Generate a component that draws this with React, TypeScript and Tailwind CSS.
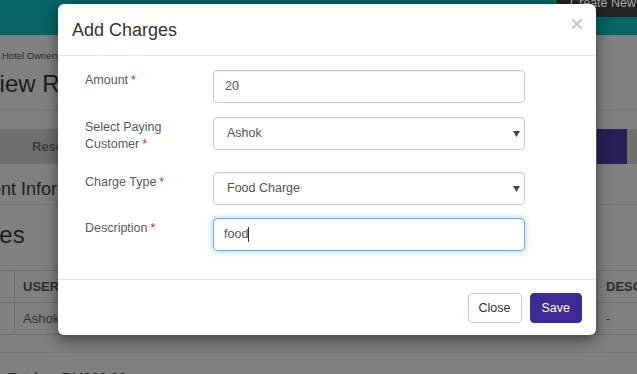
import React from "react";

const Req = () => <span className="text-[#e0182d] ml-[3px]">*</span>;

const Arrow = () => (
  <svg width="7" height="6" viewBox="0 0 7 6" className="shrink-0">
    <polygon points="0,0 7,0 3.5,6" fill="#444" />
  </svg>
);

function Row({
  h,
  label,
  children,
}: {
  h: string;
  label: React.ReactNode;
  children: React.ReactNode;
}) {
  return (
    <div className={`flex items-start ${h}`}>
      <div className="w-[128px] shrink-0 pr-[15px] pt-[2px] text-[12.5px] leading-[17px] text-[#575a63]">
        {label}
      </div>
      <div className="flex-1">{children}</div>
    </div>
  );
}

export default function App() {
  return (
    <div className="relative w-[637px] h-[374px] overflow-hidden bg-[#808080] font-['Liberation_Sans',Arial,sans-serif]">
      {/* dimmed page */}
      <div className="flex flex-col">
        <div className="h-[35px] bg-[#066464] flex justify-end">
          <div className="w-[80px] h-[17px] bg-[#232323] overflow-hidden pl-[13px]">
            <div className="text-[12.5px] leading-[13px] -mt-[3px] text-[#a9a9a9] whitespace-nowrap">
              Create New
            </div>
          </div>
        </div>
        <div className="mt-[15px] pl-[2px] text-[9.5px] leading-[11px] text-[#2a2a2a] whitespace-nowrap">
          Hotel Owners
        </div>
        <div className="mt-[6px] -ml-[16px] text-[24px] leading-[34px] text-[#1c1c1c] whitespace-nowrap">
          View Reservation
        </div>
        <div className="mt-[8px] h-px bg-[#777]" />
        <div className="mt-[19px] h-[35px] bg-[#6f6f6f] flex items-center">
          <div className="pl-[32px] text-[13px] font-bold text-[#3c3c3c]">Reservation</div>
          <div className="ml-auto mr-[10px] w-[30px] h-full bg-[#281e58]" />
        </div>
        <div className="mt-[14px] -ml-[55px] text-[18px] leading-[22px] text-[#1c1c1c] whitespace-nowrap">
          Payment Information
        </div>
        <div className="mt-[4px] h-px bg-[#777]" />
        <div className="mt-[15px] -ml-[66px] text-[24px] leading-[30px] text-[#1c1c1c] whitespace-nowrap">
          Charges
        </div>
        <div className="mt-[20px] border-t border-[#6f6f6f]">
          <div className="flex h-[32px] border-b border-[#6f6f6f]">
            <div className="w-[15px] border-r border-[#6f6f6f]" />
            <div className="flex-1 pl-[8px] flex items-center text-[13px] font-bold text-[#2e2e2e]">USER</div>
            <div className="w-[40px] border-l border-[#6f6f6f] pl-[8px] flex items-center text-[13px] font-bold text-[#2e2e2e] overflow-hidden">
              DESCRIPTION
            </div>
          </div>
          <div className="flex h-[32px] border-b border-[#6f6f6f]">
            <div className="w-[15px] border-r border-[#6f6f6f]" />
            <div className="flex-1 pl-[8px] flex items-center text-[13px] text-[#333]">Ashok</div>
            <div className="w-[40px] border-l border-[#6f6f6f] pl-[8px] flex items-center text-[13px] text-[#333]">
              -
            </div>
          </div>
        </div>
        <div className="mt-[17px] h-px bg-[#777]" />
        <div className="mt-[17px] flex pl-[8px] text-[14px] leading-[16px] text-[#222]">
          <span>Total</span>
          <span className="ml-[24px]">RM000.00</span>
        </div>
      </div>

      {/* modal */}
      <div className="absolute left-[58px] top-[4px] w-[538px] bg-white rounded-[6px] shadow-[0_5px_15px_rgba(0,0,0,0.5)]">
        <div className="flex justify-between pt-[16px] pb-[15px] pl-[14px] pr-[14px] border-b border-[#e5e5e5]">
          <h4 className="text-[18px] leading-[20px] text-[#333]">Add Charges</h4>
          <svg width="10" height="10" viewBox="0 0 10 10" className="-mt-[1px]">
            <path d="M1 1 L9 9 M9 1 L1 9" stroke="#c8c8c8" strokeWidth="2" strokeLinecap="square" />
          </svg>
        </div>
        <div className="pt-[14px] pb-[28px] pl-[27px] pr-[71px]">
          <Row
            h="h-[47px]"
            label={
              <>
                Amount
                <Req />
              </>
            }
          >
            <div className="h-[33px] border border-[#ccc] rounded-[4px] px-[11px] flex items-center text-[12.5px] text-[#555] shadow-[inset_0_1px_1px_rgba(0,0,0,0.075)]">
              20
            </div>
          </Row>
          <Row
            h="h-[55px]"
            label={
              <>
                Select Paying Customer
                <Req />
              </>
            }
          >
            <div className="h-[33px] border border-[#ccc] rounded-[4px] pl-[13px] pr-[4px] flex items-center justify-between text-[12.5px] text-[#555] shadow-[inset_0_1px_1px_rgba(0,0,0,0.075)]">
              <span>Ashok</span>
              <Arrow />
            </div>
          </Row>
          <Row
            h="h-[46px]"
            label={
              <>
                Charge Type
                <Req />
              </>
            }
          >
            <div className="h-[33px] border border-[#ccc] rounded-[4px] pl-[13px] pr-[4px] flex items-center justify-between text-[12.5px] text-[#555] shadow-[inset_0_1px_1px_rgba(0,0,0,0.075)]">
              <span>Food Charge</span>
              <Arrow />
            </div>
          </Row>
          <Row
            h="h-[33px]"
            label={
              <>
                Description
                <Req />
              </>
            }
          >
            <div className="h-[33px] border border-[#66afe9] rounded-[4px] px-[10px] flex items-center text-[12.5px] text-[#555] shadow-[inset_0_1px_1px_rgba(0,0,0,0.075),0_0_6px_rgba(102,175,233,0.6)]">
              <span>food</span>
              <span className="w-px h-[15px] bg-[#333]" />
            </div>
          </Row>
        </div>
        <div className="border-t border-[#e5e5e5] pt-[13px] pb-[12px] pr-[14px] flex justify-end gap-[8px]">
          <button className="h-[30px] px-[10px] border border-[#ccc] rounded-[4px] bg-white text-[12.5px] text-[#333]">
            Close
          </button>
          <button className="h-[30px] px-[11px] border border-[#3e2a94] rounded-[4px] bg-[#3e2a94] text-[12.5px] text-white">
            Save
          </button>
        </div>
      </div>
    </div>
  );
}
